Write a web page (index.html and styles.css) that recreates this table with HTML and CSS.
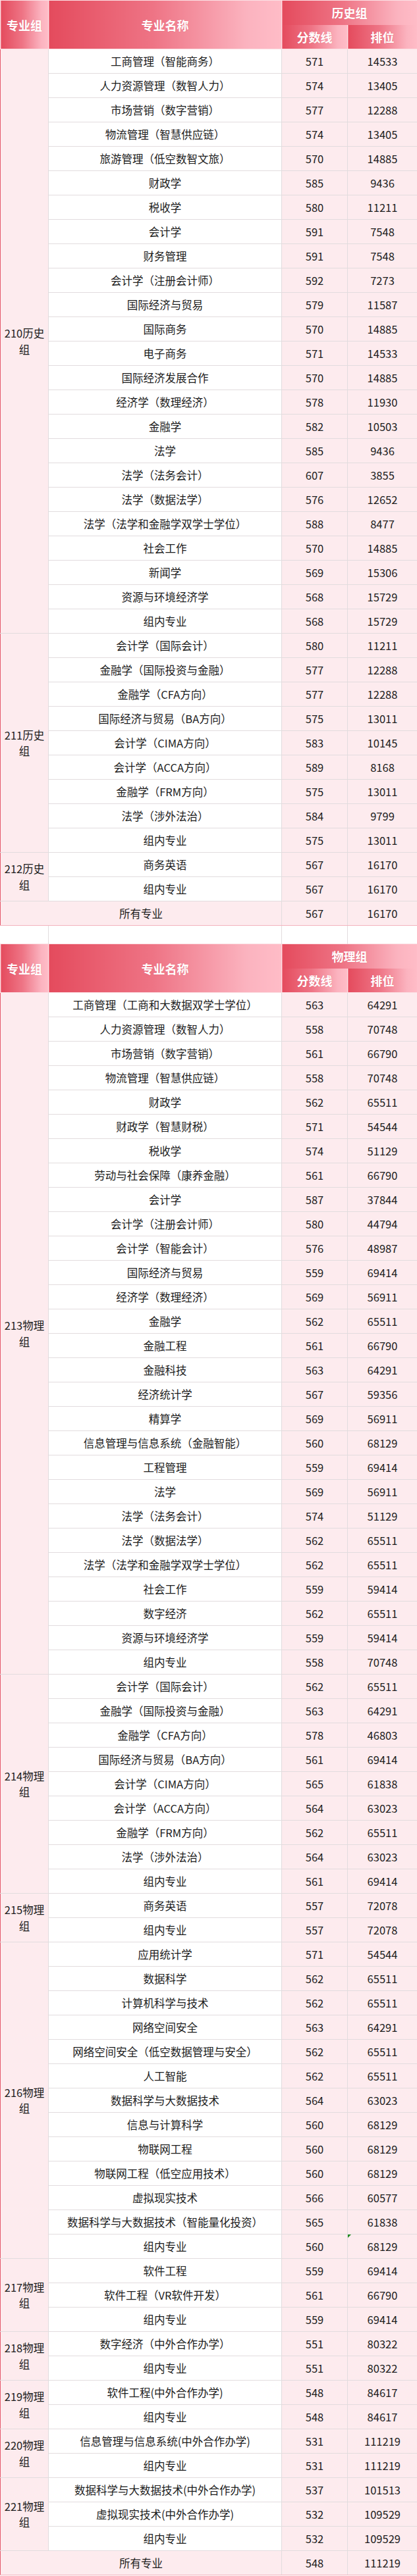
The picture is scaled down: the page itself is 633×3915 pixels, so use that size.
FILE: index.html
```html
<!DOCTYPE html>
<html lang="zh-CN">
<head>
<meta charset="utf-8">
<title>分数线与排位</title>
<link rel="stylesheet" href="styles.css">
</head>
<body>
<table class="score-table">
<colgroup>
<col class="c-group"><col class="c-name"><col class="c-score"><col class="c-rank">
</colgroup>
<tbody>
<tr class="hd"><th rowspan="2" class="h-main">专业组</th><th rowspan="2" class="h-main">专业名称</th><th colspan="2" class="h-subject">历史组</th></tr>
<tr class="hd"><th class="h-sub">分数线</th><th class="h-sub">排位</th></tr>

<tr><td class="grp" rowspan="24">210历史组</td><td>工商管理（智能商务）</td><td>571</td><td>14533</td></tr>
<tr><td>人力资源管理（数智人力）</td><td>574</td><td>13405</td></tr>
<tr><td>市场营销（数字营销）</td><td>577</td><td>12288</td></tr>
<tr><td>物流管理（智慧供应链）</td><td>574</td><td>13405</td></tr>
<tr><td>旅游管理（低空数智文旅）</td><td>570</td><td>14885</td></tr>
<tr><td>财政学</td><td>585</td><td>9436</td></tr>
<tr><td>税收学</td><td>580</td><td>11211</td></tr>
<tr><td>会计学</td><td>591</td><td>7548</td></tr>
<tr><td>财务管理</td><td>591</td><td>7548</td></tr>
<tr><td>会计学（注册会计师）</td><td>592</td><td>7273</td></tr>
<tr><td>国际经济与贸易</td><td>579</td><td>11587</td></tr>
<tr><td>国际商务</td><td>570</td><td>14885</td></tr>
<tr><td>电子商务</td><td>571</td><td>14533</td></tr>
<tr><td>国际经济发展合作</td><td>570</td><td>14885</td></tr>
<tr><td>经济学（数理经济）</td><td>578</td><td>11930</td></tr>
<tr><td>金融学</td><td>582</td><td>10503</td></tr>
<tr><td>法学</td><td>585</td><td>9436</td></tr>
<tr><td>法学（法务会计）</td><td>607</td><td>3855</td></tr>
<tr><td>法学（数据法学）</td><td>576</td><td>12652</td></tr>
<tr><td>法学（法学和金融学双学士学位）</td><td>588</td><td>8477</td></tr>
<tr><td>社会工作</td><td>570</td><td>14885</td></tr>
<tr><td>新闻学</td><td>569</td><td>15306</td></tr>
<tr><td>资源与环境经济学</td><td>568</td><td>15729</td></tr>
<tr><td>组内专业</td><td>568</td><td>15729</td></tr>

<tr><td class="grp" rowspan="9">211历史组</td><td>会计学（国际会计）</td><td>580</td><td>11211</td></tr>
<tr><td>金融学（国际投资与金融）</td><td>577</td><td>12288</td></tr>
<tr><td>金融学（CFA方向）</td><td>577</td><td>12288</td></tr>
<tr><td>国际经济与贸易（BA方向）</td><td>575</td><td>13011</td></tr>
<tr><td>会计学（CIMA方向）</td><td>583</td><td>10145</td></tr>
<tr><td>会计学（ACCA方向）</td><td>589</td><td>8168</td></tr>
<tr><td>金融学（FRM方向）</td><td>575</td><td>13011</td></tr>
<tr><td>法学（涉外法治）</td><td>584</td><td>9799</td></tr>
<tr><td>组内专业</td><td>575</td><td>13011</td></tr>

<tr><td class="grp" rowspan="2">212历史组</td><td>商务英语</td><td>567</td><td>16170</td></tr>
<tr><td>组内专业</td><td>567</td><td>16170</td></tr>
<tr class="total"><td class="all" colspan="2">所有专业</td><td>567</td><td>16170</td></tr>

<tr class="gap"><td></td><td></td><td></td><td></td></tr>

<tr class="hd"><th rowspan="2" class="h-main">专业组</th><th rowspan="2" class="h-main">专业名称</th><th colspan="2" class="h-subject">物理组</th></tr>
<tr class="hd"><th class="h-sub">分数线</th><th class="h-sub">排位</th></tr>

<tr><td class="grp" rowspan="28">213物理组</td><td>工商管理（工商和大数据双学士学位）</td><td>563</td><td>64291</td></tr>
<tr><td>人力资源管理（数智人力）</td><td>558</td><td>70748</td></tr>
<tr><td>市场营销（数字营销）</td><td>561</td><td>66790</td></tr>
<tr><td>物流管理（智慧供应链）</td><td>558</td><td>70748</td></tr>
<tr><td>财政学</td><td>562</td><td>65511</td></tr>
<tr><td>财政学（智慧财税）</td><td>571</td><td>54544</td></tr>
<tr><td>税收学</td><td>574</td><td>51129</td></tr>
<tr><td>劳动与社会保障（康养金融）</td><td>561</td><td>66790</td></tr>
<tr><td>会计学</td><td>587</td><td>37844</td></tr>
<tr><td>会计学（注册会计师）</td><td>580</td><td>44794</td></tr>
<tr><td>会计学（智能会计）</td><td>576</td><td>48987</td></tr>
<tr><td>国际经济与贸易</td><td>559</td><td>69414</td></tr>
<tr><td>经济学（数理经济）</td><td>569</td><td>56911</td></tr>
<tr><td>金融学</td><td>562</td><td>65511</td></tr>
<tr><td>金融工程</td><td>561</td><td>66790</td></tr>
<tr><td>金融科技</td><td>563</td><td>64291</td></tr>
<tr><td>经济统计学</td><td>567</td><td>59356</td></tr>
<tr><td>精算学</td><td>569</td><td>56911</td></tr>
<tr><td>信息管理与信息系统（金融智能）</td><td>560</td><td>68129</td></tr>
<tr><td>工程管理</td><td>559</td><td>69414</td></tr>
<tr><td>法学</td><td>569</td><td>56911</td></tr>
<tr><td>法学（法务会计）</td><td>574</td><td>51129</td></tr>
<tr><td>法学（数据法学）</td><td>562</td><td>65511</td></tr>
<tr><td>法学（法学和金融学双学士学位）</td><td>562</td><td>65511</td></tr>
<tr><td>社会工作</td><td>559</td><td>59414</td></tr>
<tr><td>数字经济</td><td>562</td><td>65511</td></tr>
<tr><td>资源与环境经济学</td><td>559</td><td>59414</td></tr>
<tr><td>组内专业</td><td>558</td><td>70748</td></tr>

<tr><td class="grp" rowspan="9">214物理组</td><td>会计学（国际会计）</td><td>562</td><td>65511</td></tr>
<tr><td>金融学（国际投资与金融）</td><td>563</td><td>64291</td></tr>
<tr><td>金融学（CFA方向）</td><td>578</td><td>46803</td></tr>
<tr><td>国际经济与贸易（BA方向）</td><td>561</td><td>69414</td></tr>
<tr><td>会计学（CIMA方向）</td><td>565</td><td>61838</td></tr>
<tr><td>会计学（ACCA方向）</td><td>564</td><td>63023</td></tr>
<tr><td>金融学（FRM方向）</td><td>562</td><td>65511</td></tr>
<tr><td>法学（涉外法治）</td><td>564</td><td>63023</td></tr>
<tr><td>组内专业</td><td>561</td><td>69414</td></tr>

<tr><td class="grp" rowspan="2">215物理组</td><td>商务英语</td><td>557</td><td>72078</td></tr>
<tr><td>组内专业</td><td>557</td><td>72078</td></tr>

<tr><td class="grp" rowspan="13">216物理组</td><td>应用统计学</td><td>571</td><td>54544</td></tr>
<tr><td>数据科学</td><td>562</td><td>65511</td></tr>
<tr><td>计算机科学与技术</td><td>562</td><td>65511</td></tr>
<tr><td>网络空间安全</td><td>563</td><td>64291</td></tr>
<tr><td>网络空间安全（低空数据管理与安全）</td><td>562</td><td>65511</td></tr>
<tr><td>人工智能</td><td>562</td><td>65511</td></tr>
<tr><td>数据科学与大数据技术</td><td>564</td><td>63023</td></tr>
<tr><td>信息与计算科学</td><td>560</td><td>68129</td></tr>
<tr><td>物联网工程</td><td>560</td><td>68129</td></tr>
<tr><td>物联网工程（低空应用技术）</td><td>560</td><td>68129</td></tr>
<tr><td>虚拟现实技术</td><td>566</td><td>60577</td></tr>
<tr><td>数据科学与大数据技术（智能量化投资）</td><td>565</td><td>61838</td></tr>
<tr><td>组内专业</td><td>560</td><td class="flagged"><span class="flag"></span>68129</td></tr>

<tr><td class="grp" rowspan="3">217物理组</td><td>软件工程</td><td>559</td><td>69414</td></tr>
<tr><td>软件工程（VR软件开发）</td><td>561</td><td>66790</td></tr>
<tr><td>组内专业</td><td>559</td><td>69414</td></tr>

<tr><td class="grp" rowspan="2">218物理组</td><td>数字经济（中外合作办学）</td><td>551</td><td>80322</td></tr>
<tr><td>组内专业</td><td>551</td><td>80322</td></tr>

<tr><td class="grp" rowspan="2">219物理组</td><td>软件工程(中外合作办学)</td><td>548</td><td>84617</td></tr>
<tr><td>组内专业</td><td>548</td><td>84617</td></tr>

<tr><td class="grp" rowspan="2">220物理组</td><td>信息管理与信息系统(中外合作办学)</td><td>531</td><td>111219</td></tr>
<tr><td>组内专业</td><td>531</td><td>111219</td></tr>

<tr><td class="grp" rowspan="3">221物理组</td><td>数据科学与大数据技术(中外合作办学)</td><td>537</td><td>101513</td></tr>
<tr><td>虚拟现实技术(中外合作办学)</td><td>532</td><td>109529</td></tr>
<tr><td>组内专业</td><td>532</td><td>109529</td></tr>
<tr class="total"><td class="all" colspan="2">所有专业</td><td>548</td><td>111219</td></tr>
</tbody>
</table>
</body>
</html>
```
FILE: styles.css
```css
html, body {
  margin: 0;
  padding: 0;
  background: #ffffff;
}

.score-table {
  width: 633px;
  border-collapse: collapse;
  table-layout: fixed;
  font-family: "Noto Sans CJK SC", "Noto Sans", sans-serif;
  font-size: 16.5px;
  color: #1c1c1c;
}

.c-group { width: 73px; }
.c-name { width: 354px; background: #ffffff; }
.c-score { width: 100px; background: #fdebee; }
.c-rank { width: 106px; background: #fdebee; }

.score-table tr {
  height: 37px;
}

.score-table td {
  padding: 0;
  text-align: center;
  vertical-align: middle;
  border: 1px solid #e2dcde;
  line-height: 24px;
  white-space: nowrap;
}

.score-table td.grp {
  background: #fdebee;
  border-left: 1px solid #e45a6c;
  white-space: normal;
  padding: 0 3px;
  line-height: 24.5px;
}

.score-table td.all {
  background: #fdebee;
  border-left: 1px solid #e45a6c;
}

.score-table tr.total td {
  border-bottom: 1px solid #f3b3bd;
}

.score-table tr.gap {
  height: 28px;
}

.score-table tr.gap td {
  background: #ffffff;
  border-top: none;
  border-bottom: none;
  border-left: 1px solid #ece8e9;
}

.score-table tr.gap td:first-child {
  border-left: none;
}

.score-table th {
  padding: 0;
  color: #ffffff;
  font-size: 18px;
  font-weight: 700;
  text-align: center;
  vertical-align: middle;
  border: 1px solid #fbe0e4;
  text-shadow: 0 0 1px rgba(190, 40, 60, 0.35);
  background: linear-gradient(90deg, #e44b5d 0%, #ee7485 45%, #fbb3bf 85%, #ffbcc7 100%);
}

.score-table th.h-subject {
  border-bottom: none;
}

.score-table th.h-sub {
  border-top: none;
}

.flagged {
  position: relative;
}

.flag {
  position: absolute;
  left: 0;
  top: 0;
  width: 0;
  height: 0;
  border-top: 5px solid #1f8a1f;
  border-right: 5px solid transparent;
}
```
